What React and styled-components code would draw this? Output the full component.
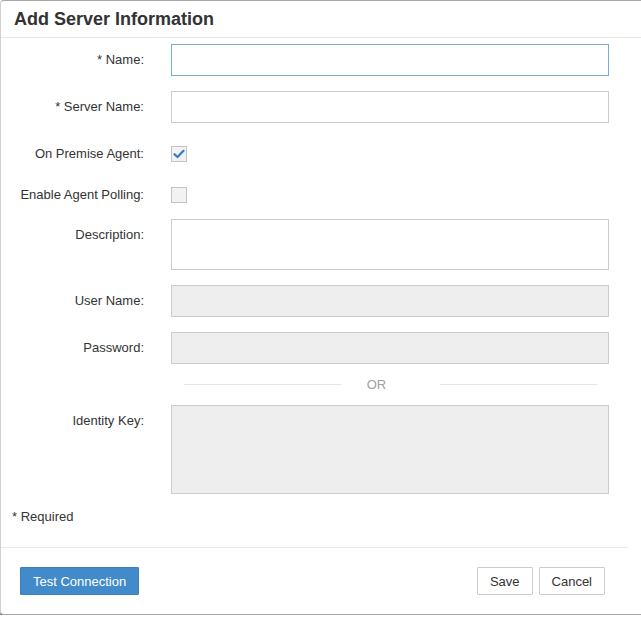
import React from 'react'
import styled, { createGlobalStyle } from 'styled-components'

const GlobalStyle = createGlobalStyle`
  html, body {
    margin: 0;
    padding: 0;
    background: #fff;
    overflow: hidden;
  }
  body {
    font-family: "Liberation Sans", Arial, sans-serif;
    font-size: 13px;
    color: #333;
  }
`

const Dialog = styled.div`
  width: calc(100% + 6px);
  height: 615px;
  box-sizing: border-box;
  border: 1px solid #a8a8a8;
  border-left-color: #d0d0d0;
  border-radius: 4px;
  background: #fff;
  box-shadow: 0 2px 2px rgba(0, 0, 0, 0.7);
  display: flex;
  flex-direction: column;
`

const Header = styled.div`
  height: 36px;
  padding: 0 13px;
  display: flex;
  align-items: center;
  border-bottom: 1px solid #e8e8e8;
`

const Title = styled.h4`
  margin: 0;
  font-size: 18px;
  font-weight: bold;
  color: #333;
`

const Body = styled.div`
  padding-top: 6px;
`

const Row = styled.div`
  display: grid;
  grid-template-columns: 143px 438px;
  column-gap: 27px;
  margin-bottom: ${p => p.$mb ?? 15}px;
  min-height: ${p => p.$h ?? 32}px;
  align-items: ${p => (p.$center ? 'center' : 'start')};
`

const Label = styled.label`
  text-align: right;
  line-height: 32px;
  font-size: 13px;
  color: #333;
`

const Input = styled.input`
  box-sizing: border-box;
  width: 100%;
  height: ${p => p.$h ?? 32}px;
  margin: 0;
  padding: 6px 10px;
  font: inherit;
  border: 1px solid ${p => (p.$focus ? '#78aed4' : '#ccc')};
  background: ${p => (p.disabled ? '#eee' : '#fff')};
  border-radius: 0;
  outline: none;
`

const TextArea = styled.textarea`
  box-sizing: border-box;
  display: block;
  width: 100%;
  height: ${p => p.$h}px;
  margin: 0;
  padding: 6px 10px;
  font: inherit;
  resize: none;
  border: 1px solid #ccc;
  background: ${p => (p.disabled ? '#eee' : '#fff')};
  border-radius: 0;
  outline: none;
`

const Check = styled.span`
  box-sizing: border-box;
  width: 16px;
  height: 16px;
  border: 1px solid #c4c4c4;
  background: #f2f2f2;
  display: flex;
  align-items: center;
  justify-content: center;
`

const OrLine = styled.div`
  display: flex;
  align-items: center;
  height: 20px;
  padding: 0 12px 0 13px;
`

const Rule = styled.div`
  flex: 1;
  height: 1px;
  background: #e6e6e6;
`

const OrText = styled.span`
  margin: 0 54px 0 26px;
  color: #a0a0a0;
  font-size: 13px;
`

const Required = styled.div`
  padding-left: 11px;
  line-height: 18px;
  margin-top: 14px;
`

const Footer = styled.div`
  margin-top: 21px;
  margin-right: 18px;
  border-top: 1px solid #e8e8e8;
  padding: 19px 23px 0 19px;
  display: flex;
  align-items: center;
`

const Spacer = styled.div`
  flex: 1;
`

const Button = styled.button`
  height: 28px;
  padding: 0 12px;
  margin: 0 0 0 ${p => p.$ml ?? 0}px;
  font-family: "Liberation Sans", Arial, sans-serif;
  font-size: 13px;
  border-radius: 1px;
  cursor: pointer;
  color: ${p => (p.$primary ? '#fff' : '#333')};
  background: ${p => (p.$primary ? '#428bca' : '#fff')};
  border: 1px solid ${p => (p.$primary ? '#3b7fbd' : '#ccc')};
`

const CheckMark = () => (
  <svg width="12" height="10" viewBox="0 0 12 10">
    <path d="M1.5 5.2 L4.5 8 L10.5 1.8" fill="none" stroke="#3a78c2" strokeWidth="2.2" strokeLinecap="round" strokeLinejoin="round" />
  </svg>
)

export default function App() {
  return (
    <>
      <GlobalStyle />
      <Dialog>
        <Header>
          <Title>Add Server Information</Title>
        </Header>
        <Body>
          <Row>
            <Label>* Name:</Label>
            <Input $focus />
          </Row>
          <Row>
            <Label>* Server Name:</Label>
            <Input />
          </Row>
          <Row $mb={9} $center>
            <Label>On Premise Agent:</Label>
            <Check><CheckMark /></Check>
          </Row>
          <Row $mb={8} $center>
            <Label>Enable Agent Polling:</Label>
            <Check />
          </Row>
          <Row>
            <Label>Description:</Label>
            <TextArea $h={51} />
          </Row>
          <Row>
            <Label>User Name:</Label>
            <Input disabled />
          </Row>
          <Row $mb={10}>
            <Label>Password:</Label>
            <Input type="password" disabled />
          </Row>
          <Row $mb={11} $h={20}>
            <span />
            <OrLine>
              <Rule />
              <OrText>OR</OrText>
              <Rule />
            </OrLine>
          </Row>
          <Row $mb={0} $h={89}>
            <Label>Identity Key:</Label>
            <TextArea $h={89} disabled />
          </Row>
          <Required>* Required</Required>
        </Body>
        <Footer>
          <Button $primary>Test Connection</Button>
          <Spacer />
          <Button>Save</Button>
          <Button $ml={6}>Cancel</Button>
        </Footer>
      </Dialog>
    </>
  )
}
